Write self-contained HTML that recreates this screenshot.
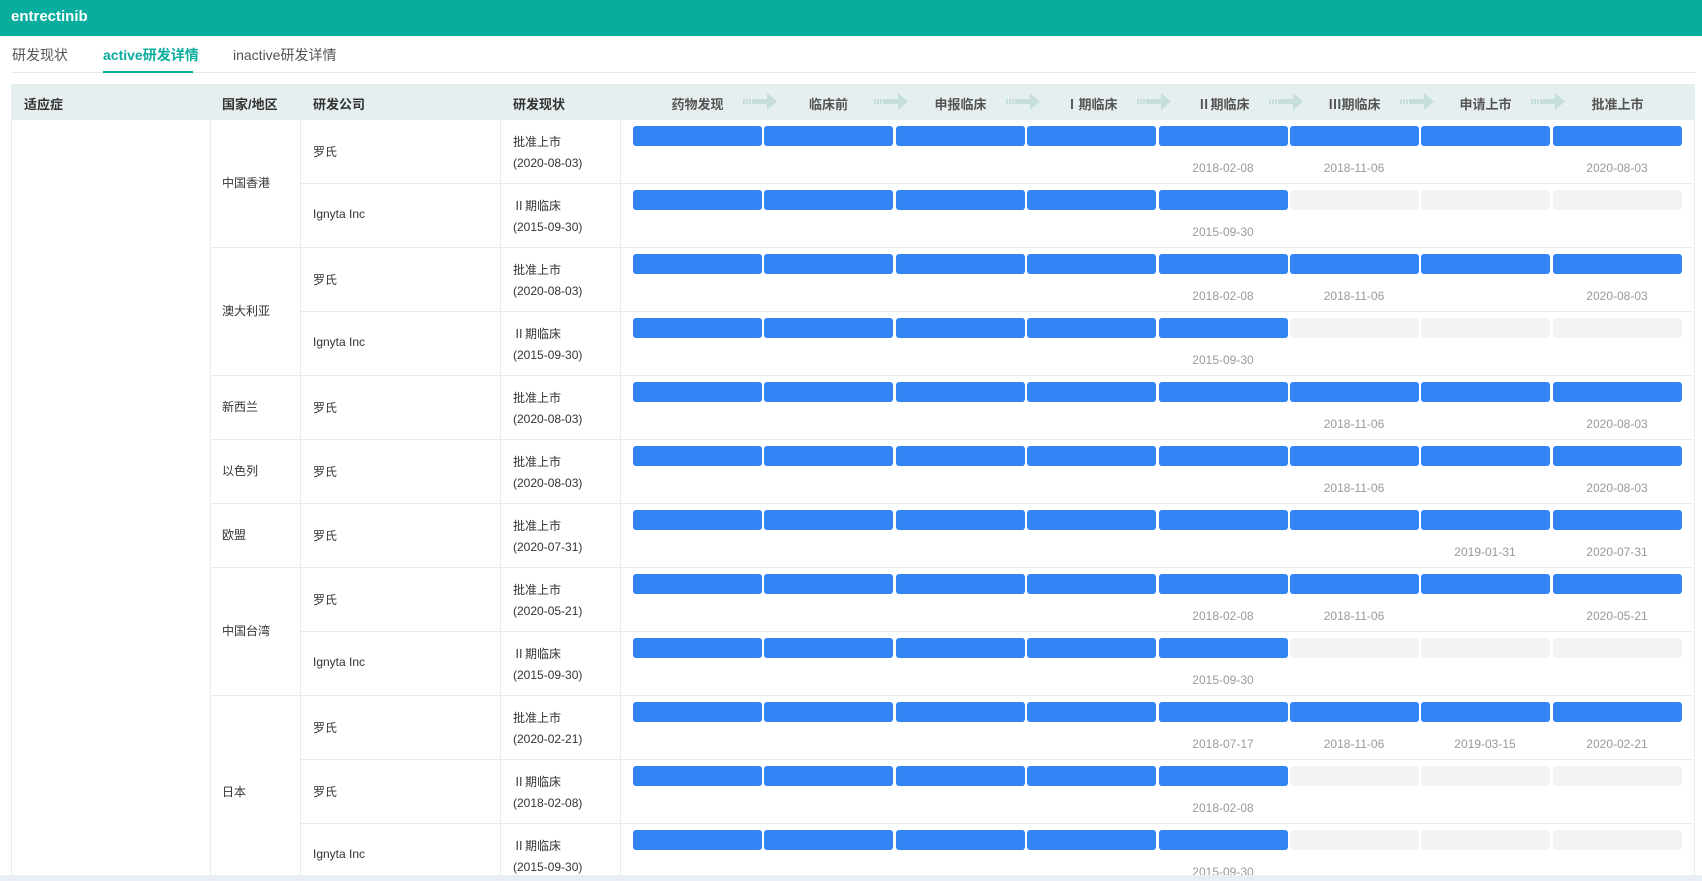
<!DOCTYPE html>
<html><head><meta charset="utf-8"><style>
*{margin:0;padding:0;box-sizing:border-box}
body{width:1702px;height:881px;overflow:hidden;background:#fff;font-family:"Liberation Sans","Noto Sans CJK SC",sans-serif;position:relative;color:#333}
.a{position:absolute;white-space:nowrap}
.top{left:0;top:0;width:1702px;height:36px;background:#08ad9d}
.title{left:11px;top:8px;color:#fff;font-weight:bold;font-size:15px}
.tab{top:45px;font-size:14px;color:#555}
.hd{left:11px;top:84px;width:1684px;height:36px;background:#e6efef}
.ht{top:94px;font-size:13px;font-weight:bold;color:#333}
.st{top:94px;font-size:13px;font-weight:bold;color:#555;width:129px;text-align:center}
.t{font-size:12px;color:#333}
.hl{height:1px;background:#e8ebf0}
.vl{width:1px;background:#e8ebf0}
</style></head><body>
<div class="a top"></div>
<div class="a title">entrectinib</div>
<div class="a tab" style="left:12px">研发现状</div>
<div class="a tab" style="left:103px;color:#08ad9d;font-weight:bold">active研发详情</div>
<div class="a tab" style="left:233px">inactive研发详情</div>
<div class="a" style="left:12px;top:72px;width:1683px;height:1px;background:#e4e7ec"></div>
<div class="a" style="left:103px;top:71px;width:90px;height:2px;background:#08ad9d"></div>

<div class="a hd"></div>
<div class="a ht" style="left:24px">适应症</div>
<div class="a ht" style="left:222px">国家/地区</div>
<div class="a ht" style="left:313px">研发公司</div>
<div class="a ht" style="left:513px">研发现状</div>
<div class="a st" style="left:633px">药物发现</div>
<div class="a st" style="left:764px">临床前</div>
<div class="a st" style="left:896px">申报临床</div>
<div class="a st" style="left:1027px">Ⅰ期临床</div>
<div class="a st" style="left:1159px">Ⅱ期临床</div>
<div class="a st" style="left:1290px">Ⅲ期临床</div>
<div class="a st" style="left:1421px">申请上市</div>
<div class="a st" style="left:1553px">批准上市</div>
<svg class="a" style="left:0;top:84px" width="1702" height="36">
<g fill="#c5dedb">
<g id="ar"><rect x="743" y="15" width="2" height="5"/><rect x="746" y="15" width="2" height="5"/><rect x="749" y="15" width="2" height="5"/><rect x="752" y="15" width="16" height="5"/><polygon points="767,9 777,17.5 767,26"/></g>
<use href="#ar" x="131"/><use href="#ar" x="263"/><use href="#ar" x="394"/><use href="#ar" x="526"/><use href="#ar" x="657"/><use href="#ar" x="788"/>
</g></svg>

<div class="a vl" style="left:11px;top:120px;height:756px"></div>
<div class="a vl" style="left:1694px;top:120px;height:756px"></div>
<div class="a vl" style="left:210px;top:120px;height:756px"></div>
<div class="a vl" style="left:300px;top:120px;height:756px"></div>
<div class="a vl" style="left:500px;top:120px;height:756px"></div>
<div class="a vl" style="left:620px;top:120px;height:756px"></div>
<div class="a hl" style="left:300px;top:183px;width:1394px"></div>
<div class="a hl" style="left:210px;top:247px;width:1484px"></div>
<div class="a hl" style="left:300px;top:311px;width:1394px"></div>
<div class="a hl" style="left:210px;top:375px;width:1484px"></div>
<div class="a hl" style="left:210px;top:439px;width:1484px"></div>
<div class="a hl" style="left:210px;top:503px;width:1484px"></div>
<div class="a hl" style="left:210px;top:567px;width:1484px"></div>
<div class="a hl" style="left:300px;top:631px;width:1394px"></div>
<div class="a hl" style="left:210px;top:695px;width:1484px"></div>
<div class="a hl" style="left:300px;top:759px;width:1394px"></div>
<div class="a hl" style="left:300px;top:823px;width:1394px"></div>

<div class="a t" style="left:222px;top:174px">中国香港</div>
<div class="a t" style="left:222px;top:302px">澳大利亚</div>
<div class="a t" style="left:222px;top:398px">新西兰</div>
<div class="a t" style="left:222px;top:462px">以色列</div>
<div class="a t" style="left:222px;top:526px">欧盟</div>
<div class="a t" style="left:222px;top:622px">中国台湾</div>
<div class="a t" style="left:222px;top:783px">日本</div>

<div class="a t" style="left:313px;top:143px">罗氏</div><div class="a t" style="left:513px;top:133px">批准上市</div><div class="a t" style="left:513px;top:156px">(2020-08-03)</div>
<div class="a t" style="left:313px;top:207px">Ignyta Inc</div><div class="a t" style="left:513px;top:197px">Ⅱ期临床</div><div class="a t" style="left:513px;top:220px">(2015-09-30)</div>
<div class="a t" style="left:313px;top:271px">罗氏</div><div class="a t" style="left:513px;top:261px">批准上市</div><div class="a t" style="left:513px;top:284px">(2020-08-03)</div>
<div class="a t" style="left:313px;top:335px">Ignyta Inc</div><div class="a t" style="left:513px;top:325px">Ⅱ期临床</div><div class="a t" style="left:513px;top:348px">(2015-09-30)</div>
<div class="a t" style="left:313px;top:399px">罗氏</div><div class="a t" style="left:513px;top:389px">批准上市</div><div class="a t" style="left:513px;top:412px">(2020-08-03)</div>
<div class="a t" style="left:313px;top:463px">罗氏</div><div class="a t" style="left:513px;top:453px">批准上市</div><div class="a t" style="left:513px;top:476px">(2020-08-03)</div>
<div class="a t" style="left:313px;top:527px">罗氏</div><div class="a t" style="left:513px;top:517px">批准上市</div><div class="a t" style="left:513px;top:540px">(2020-07-31)</div>
<div class="a t" style="left:313px;top:591px">罗氏</div><div class="a t" style="left:513px;top:581px">批准上市</div><div class="a t" style="left:513px;top:604px">(2020-05-21)</div>
<div class="a t" style="left:313px;top:655px">Ignyta Inc</div><div class="a t" style="left:513px;top:645px">Ⅱ期临床</div><div class="a t" style="left:513px;top:668px">(2015-09-30)</div>
<div class="a t" style="left:313px;top:719px">罗氏</div><div class="a t" style="left:513px;top:709px">批准上市</div><div class="a t" style="left:513px;top:732px">(2020-02-21)</div>
<div class="a t" style="left:313px;top:783px">罗氏</div><div class="a t" style="left:513px;top:773px">Ⅱ期临床</div><div class="a t" style="left:513px;top:796px">(2018-02-08)</div>
<div class="a t" style="left:313px;top:847px">Ignyta Inc</div><div class="a t" style="left:513px;top:837px">Ⅱ期临床</div><div class="a t" style="left:513px;top:860px">(2015-09-30)</div>

<svg class="a" style="left:0;top:0" width="1702" height="881">
<defs>
<g id="f8" fill="#3384f5"><rect x="633" width="129" height="20" rx="3"/><rect x="764" width="129" height="20" rx="3"/><rect x="896" width="129" height="20" rx="3"/><rect x="1027" width="129" height="20" rx="3"/><rect x="1159" width="129" height="20" rx="3"/><rect x="1290" width="129" height="20" rx="3"/><rect x="1421" width="129" height="20" rx="3"/><rect x="1553" width="129" height="20" rx="3"/></g>
<g id="f5"><g fill="#3384f5"><rect x="633" width="129" height="20" rx="3"/><rect x="764" width="129" height="20" rx="3"/><rect x="896" width="129" height="20" rx="3"/><rect x="1027" width="129" height="20" rx="3"/><rect x="1159" width="129" height="20" rx="3"/></g><g fill="#f3f3f3"><rect x="1290" width="129" height="20" rx="3"/><rect x="1421" width="129" height="20" rx="3"/><rect x="1553" width="129" height="20" rx="3"/></g></g>
</defs>
<use href="#f8" y="126"/><use href="#f5" y="190"/><use href="#f8" y="254"/><use href="#f5" y="318"/><use href="#f8" y="382"/><use href="#f8" y="446"/><use href="#f8" y="510"/><use href="#f8" y="574"/><use href="#f5" y="638"/><use href="#f8" y="702"/><use href="#f5" y="766"/><use href="#f5" y="830"/>
<g font-family="Liberation Sans, sans-serif" font-size="12" fill="#999" text-anchor="middle">
<text x="1223" y="172">2018-02-08</text><text x="1354" y="172">2018-11-06</text><text x="1617" y="172">2020-08-03</text>
<text x="1223" y="236">2015-09-30</text>
<text x="1223" y="300">2018-02-08</text><text x="1354" y="300">2018-11-06</text><text x="1617" y="300">2020-08-03</text>
<text x="1223" y="364">2015-09-30</text>
<text x="1354" y="428">2018-11-06</text><text x="1617" y="428">2020-08-03</text>
<text x="1354" y="492">2018-11-06</text><text x="1617" y="492">2020-08-03</text>
<text x="1485" y="556">2019-01-31</text><text x="1617" y="556">2020-07-31</text>
<text x="1223" y="620">2018-02-08</text><text x="1354" y="620">2018-11-06</text><text x="1617" y="620">2020-05-21</text>
<text x="1223" y="684">2015-09-30</text>
<text x="1223" y="748">2018-07-17</text><text x="1354" y="748">2018-11-06</text><text x="1485" y="748">2019-03-15</text><text x="1617" y="748">2020-02-21</text>
<text x="1223" y="812">2018-02-08</text>
<text x="1223" y="876">2015-09-30</text>
</g>
</svg>
<div class="a" style="left:0;top:875px;width:1702px;height:6px;background:#e9eef5"></div>
</body></html>
